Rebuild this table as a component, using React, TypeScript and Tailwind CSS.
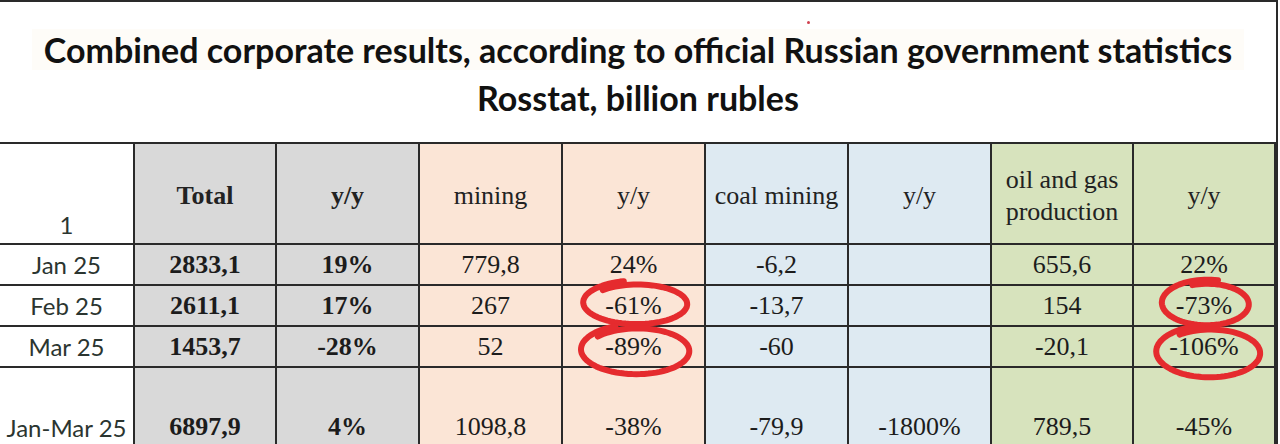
import React from 'react';

const colBg = [
  'bg-white',
  'bg-[#d9d9d9]',
  'bg-[#d9d9d9]',
  'bg-[#fbe5d6]',
  'bg-[#fbe5d6]',
  'bg-[#deeaf2]',
  'bg-[#deeaf2]',
  'bg-[#d7e3bd]',
  'bg-[#d7e3bd]',
];

const rows = [
  ['Jan 25', '2833,1', '19%', '779,8', '24%', '-6,2', '', '655,6', '22%'],
  ['Feb 25', '2611,1', '17%', '267', '-61%', '-13,7', '', '154', '-73%'],
  ['Mar 25', '1453,7', '-28%', '52', '-89%', '-60', '', '-20,1', '-106%'],
];

const total = ['Jan-Mar 25', '6897,9', '4%', '1098,8', '-38%', '-79,9', '-1800%', '789,5', '-45%'];

// hand drawn loop: ellipse that runs a bit past its start
const ring = (cx: number, cy: number, rx: number, ry: number, start: number, extra: number) => {
  const n = 90;
  const end = start + Math.PI * 2 + extra;
  let d = '';
  for (let i = 0; i <= n; i++) {
    const t = i / n;
    const a = start + (end - start) * t;
    const k = 1 + 0.07 * t;
    const x = cx + rx * k * Math.cos(a);
    const y = cy + ry * k * Math.sin(a) - 3 * t;
    d += (i === 0 ? 'M' : 'L') + x.toFixed(1) + ' ' + y.toFixed(1) + ' ';
  }
  return d;
};

const serif = "font-['Liberation_Serif','Times_New_Roman',serif]";
const sans = "font-['Lato','Open_Sans',sans-serif]";

const HeaderCell = ({ i, children }: { i: number; children: React.ReactNode }) => (
  <div
    className={`${colBg[i]} ${serif} flex items-center justify-center text-center text-[26px] leading-[32px] text-[#222] pt-1 ${
      i === 1 || i === 2 ? 'font-bold' : ''
    }`}
  >
    {children}
  </div>
);

const App = () => {
  return (
    <div className="relative w-[1280px] h-[444px] overflow-hidden bg-white">
      <div className="w-[1278px] border-t-2 border-r-2 border-[#2a2a2a] h-[142px] pt-[24px] text-center">
        <div className={`${sans} font-bold text-[34px] leading-[48px] text-[#111]`}>
          <span className="bg-[#fefcf8] px-3">
            Combined corporate results, according to official Russian government statistics
          </span>
          <br />
          Rosstat, billion rubles
        </div>
      </div>

      <div className="w-[1278px] bg-[#2a2a2a] pt-[2px] pr-[2px] grid gap-[2px] grid-cols-[133px_140px_141px_141px_141px_141px_141px_140px_140px] grid-rows-[99px_39px_39px_39px_80px]">
        <div className={`bg-white ${sans} flex items-end justify-center text-[24px] text-[#2b3530]`}>1</div>
        <HeaderCell i={1}>Total</HeaderCell>
        <HeaderCell i={2}>y/y</HeaderCell>
        <HeaderCell i={3}>mining</HeaderCell>
        <HeaderCell i={4}>y/y</HeaderCell>
        <HeaderCell i={5}>coal mining</HeaderCell>
        <HeaderCell i={6}>y/y</HeaderCell>
        <HeaderCell i={7}>
          oil and gas
          <br />
          production
        </HeaderCell>
        <HeaderCell i={8}>y/y</HeaderCell>

        {rows.map((r) =>
          r.map((v, i) => (
            <div
              key={r[0] + i}
              className={`${colBg[i]} flex items-center justify-center ${
                i === 0
                  ? `${sans} text-[24px] text-[#2b3530]`
                  : `${serif} text-[26px] text-[#1c1c1c] ${i < 3 ? 'font-bold' : ''}`
              }`}
            >
              {v}
            </div>
          ))
        )}

        {total.map((v, i) => (
          <div
            key={'t' + i}
            className={`${colBg[i]} flex items-end justify-center pb-[2px] ${
              i === 0
                ? `${sans} text-[24px] text-[#2b3530]`
                : `${serif} text-[26px] text-[#1c1c1c] ${i < 3 ? 'font-bold' : ''}`
            }`}
          >
            {v}
          </div>
        ))}
      </div>

      <span className="absolute left-[807px] top-[21px] w-[3px] h-[3px] rounded-full bg-[#d0404f]" />

      <svg className="absolute left-0 top-0 pointer-events-none" width="1280" height="444">
        <g fill="none" stroke="#e52b2e" strokeWidth="6" strokeLinecap="round" strokeLinejoin="round">
          <path d={ring(636, 305, 50, 20, -2.3, 0.5)} />
          <path d={ring(636, 352, 52, 23, -2.4, 0.45)} />
          <path d={ring(1206, 305, 42, 21, -1.9, 0.6)} />
          <path d={ring(1209, 354, 50, 24, -2.2, 0.5)} />
        </g>
      </svg>
    </div>
  );
};

export default App;
